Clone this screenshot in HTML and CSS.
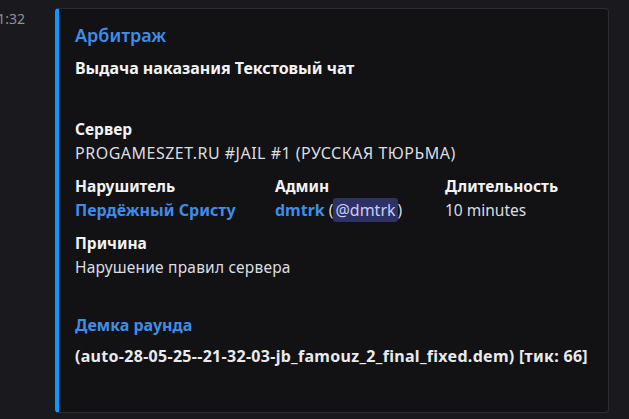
FILE: index.html
```html
<!DOCTYPE html>
<html lang="ru">
<head>
<meta charset="utf-8">
<link rel="stylesheet" href="styles.css">
</head>
<body>
<div class="message">
  <div class="gutter"><span class="time">21:32</span></div>
  <div class="embed">
    <div class="title">Арбитраж</div>
    <div class="desc"><strong>Выдача наказания Текстовый чат</strong></div>
    <div class="fields">
      <div class="field full">
        <div class="fname">Сервер</div>
        <div class="fvalue caps">PROGAMESZET.RU #JAIL #1 (РУССКАЯ ТЮРЬМА)</div>
      </div>
      <div class="field c1">
        <div class="fname">Нарушитель</div>
        <div class="fvalue"><span class="link">Пердёжный Сристу</span></div>
      </div>
      <div class="field c2">
        <div class="fname">Админ</div>
        <div class="fvalue"><span class="link">dmtrk</span> (<span class="mention">@dmtrk</span>)</div>
      </div>
      <div class="field c3">
        <div class="fname">Длительность</div>
        <div class="fvalue">10 minutes</div>
      </div>
      <div class="field full">
        <div class="fname">Причина</div>
        <div class="fvalue reason">Нарушение правил сервера</div>
      </div>
      <div class="field full demo">
        <div class="fname link">Демка раунда</div>
        <div class="fvalue bold">(auto-28-05-25--21-32-03-jb_famouz_2_final_fixed.dem) [тик: 66]</div>
      </div>
    </div>
  </div>
</div>
</body>
</html>
```
FILE: styles.css
```css
html, body {
  margin: 0;
  padding: 0;
  background: #1a1a1e;
  font-family: "Noto Sans", "Open Sans", sans-serif;
  color: #dbdee1;
}
.message {
  display: flex;
  padding-top: 8px;
}
.gutter {
  width: 55px;
  flex: none;
  display: flex;
  justify-content: flex-end;
  padding-right: 30px;
  box-sizing: border-box;
  height: 22px;
}
.time {
  font-size: 14px;
  color: #8e9198;
  white-space: nowrap;
  line-height: 22px;
}
.embed {
  width: 554px;
  height: 405px;
  box-sizing: border-box;
  background: #121214;
  border: 1px solid #2c2c31;
  border-left: 4px solid #0a98ff;
  border-radius: 4px;
  padding: 14px 16px 16px 16px;
}
.title {
  font-size: 18px;
  font-weight: 600;
  color: #3f8de8;
  line-height: 24px;
}
.desc {
  margin-top: 11px;
  font-size: 16px;
  line-height: 20px;
  color: #f2f3f5;
}
.desc strong { font-weight: 700; }
.fields {
  display: grid;
  grid-template-columns: 200px 170px 1fr;
  row-gap: 12px;
  margin-top: 41px;
}
.field.full { grid-column: 1 / 4; }
.fname {
  font-size: 15.5px;
  font-weight: 700;
  color: #f2f3f5;
  line-height: 20px;
  margin-bottom: 3px;
}
.fvalue {
  font-size: 15.5px;
  line-height: 22px;
  color: #dbdee1;
  white-space: nowrap;
}
.fvalue.caps {
  font-size: 16px;
  letter-spacing: 0.5px;
}
.fvalue.reason {
  font-size: 15.5px;
  letter-spacing: 0.2px;
}
.link {
  color: #3f8de8;
  font-weight: 700;
  font-size: 16px;
}
.fname.link { color: #3f8de8; font-size: 16px; }
.bold {
  font-weight: 700;
  color: #e9eaec;
  font-size: 16px;
  letter-spacing: 0.3px;
}
.mention {
  background: #2d3163;
  color: #c9cdfb;
  border-radius: 3px;
  padding: 1px 2px;
  font-size: 16px;
}
.demo { margin-top: 25px; }
.demo .fname { margin-bottom: 10px; }
```
